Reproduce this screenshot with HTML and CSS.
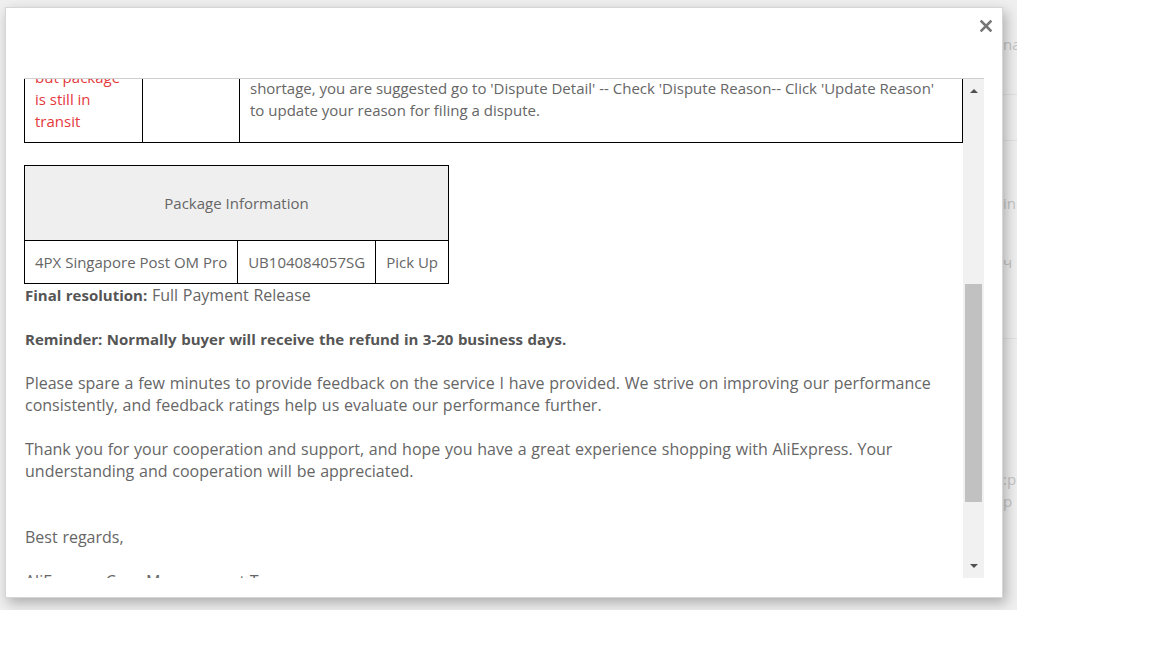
FILE: index.html
```html
<!DOCTYPE html>
<html>
<head>
<meta charset="utf-8">
<link rel="stylesheet" href="styles.css">
</head>
<body>
<div class="page">
  <div class="under">
    <div class="under-col">
      <div class="u-item u-t1">name</div>
      <div class="u-line u-l1"></div>
      <div class="u-line u-l2"></div>
      <div class="u-item u-t2">in</div>
      <div class="u-item u-t3">ч</div>
      <div class="u-line u-l3"></div>
      <div class="u-item u-t4">:р</div>
      <div class="u-item u-t5">р</div>
    </div>
  </div>

  <div class="modal">
    <div class="modal-header">
      <button class="close" aria-label="Close">
        <svg width="12" height="12" viewBox="0 0 12 12"><path d="M1.5 1.5 L10.5 10.5 M10.5 1.5 L1.5 10.5" stroke="#777" stroke-width="2.6" stroke-linecap="square"/></svg>
      </button>
    </div>
    <div class="modal-body">
      <div class="scroller">
        <div class="viewport">
          <div class="content" style="margin-top:-90px">
            <table class="reason-table">
              <tr>
                <td class="c1 red">Buyer did not<br>receive the<br>goods,<br>but package<br>is still in<br>transit</td>
                <td class="c2"></td>
                <td class="c3">If the tracking information shows that the goods are on the way,<br>please wait patiently for the package to arrive.<br>If your dispute is due to a wrong item or a quantity<br>shortage, you are suggested go to 'Dispute Detail' -- Check 'Dispute Reason-- Click 'Update Reason'<br>to update your reason for filing a dispute.</td>
              </tr>
            </table>

            <table class="pkg-table">
              <tr><th colspan="3">Package Information</th></tr>
              <tr>
                <td>4PX Singapore Post OM Pro</td>
                <td>UB104084057SG</td>
                <td>Pick Up</td>
              </tr>
            </table>

            <p><b>Final resolution:</b> Full Payment Release</p>
            <p><b>Reminder: Normally buyer will receive the refund in 3-20 business days.</b></p>
            <p>Please spare a few minutes to provide feedback on the service I have provided. We strive on improving our performance consistently, and feedback ratings help us evaluate our performance further.</p>
            <p class="gap2">Thank you for your cooperation and support, and hope you have a great experience shopping with AliExpress. Your understanding and cooperation will be appreciated.</p>
            <p>Best regards,</p>
            <p>AliExpress Case Management Team</p>
          </div>
        </div>
        <div class="scrollbar">
          <div class="arrow up"></div>
          <div class="thumb"></div>
          <div class="arrow down"></div>
        </div>
      </div>
    </div>
  </div>
</div>
</body>
</html>
```

FILE: styles.css
```css
* { box-sizing: border-box; }
html, body { margin: 0; padding: 0; background: #fff; }
body { font-family: "Open Sans", "Liberation Sans", sans-serif; }

.page {
  position: relative;
  width: 1017px;
  height: 610px;
  background: #efefef;
  overflow: hidden;
}

/* faint underlying page peeking out on the right */
.under { display: flex; justify-content: flex-end; height: 100%; }
.under-col {
  width: 14px;
  overflow: hidden;
  color: #c4c4c4;
  font-size: 15px;
  line-height: 20px;
  white-space: nowrap;
}
.u-item { height: 20px; }
.u-line { height: 1px; background: #e2e2e2; }
.u-t1 { margin-top: 34px; }
.u-l1 { margin-top: 40px; }
.u-l2 { margin-top: 45px; }
.u-t2 { margin-top: 52px; }
.u-t3 { margin-top: 39px; }
.u-l3 { margin-top: 66px; }
.u-t4 { margin-top: 130px; }
.u-t5 { margin-top: 2px; }

.modal {
  position: absolute;
  left: 5px;
  top: 7px;
  width: 998px;
  height: 591px;
  background: #fff;
  border: 1px solid #d6d6d6;
  box-shadow: 3px 5px 12px rgba(0,0,0,0.28);
  display: flex;
  flex-direction: column;
}

.modal-header {
  height: 71px;
  display: flex;
  justify-content: flex-end;
  align-items: flex-start;
  padding: 12px 10px 0 0;
}
.close {
  border: 0;
  background: transparent;
  padding: 0;
  width: 12px;
  height: 12px;
  display: flex;
  cursor: pointer;
}

.modal-body { padding: 0 18px 19px 18px; flex: 1; display: flex; }

.scroller {
  flex: 1;
  display: flex;
  border-top: 1px solid #cfcfcf;
  height: 500px;
}
.viewport {
  flex: 1;
  overflow: hidden;
  color: #666;
  font-size: 16px;
  line-height: 22px;
}
.content p { margin: 0 0 22px 0; padding-left: 1px; word-spacing: 0.6px; }
.content p.gap2 { margin-bottom: 44px; }
.content b { font-weight: 700; font-size: 15px; color: #555; }

.reason-table {
  width: 939px;
  border-collapse: collapse;
  margin-bottom: 22px;
  table-layout: fixed;
  font-size: 15px;
}
.reason-table td {
  border: 1px solid #000;
  padding: 10px;
  vertical-align: middle;
  white-space: nowrap;
  overflow: hidden;
}
.reason-table .c1 { width: 118px; }
.reason-table .c2 { width: 97px; }
.red { color: #e4393c; }

.pkg-table {
  border-collapse: collapse;
  font-size: 15px;
}
.pkg-table th {
  border: 1px solid #000;
  background: #efefef;
  font-weight: 400;
  height: 75px;
  padding: 0;
  text-align: center;
  vertical-align: middle;
}
.pkg-table td {
  border: 1px solid #000;
  padding: 10px;
  text-align: center;
  white-space: nowrap;
}

.scrollbar {
  width: 21px;
  background: #f1f1f1;
  display: flex;
  flex-direction: column;
  align-items: center;
}
.arrow { width: 0; height: 0; border-left: 4px solid transparent; border-right: 4px solid transparent; }
.arrow.up { border-bottom: 4px solid #505050; margin-top: 10px; }
.arrow.down { border-top: 4px solid #505050; margin-top: auto; margin-bottom: 10px; }
.thumb {
  width: 17px;
  height: 218px;
  background: #c1c1c1;
  margin-top: 191px;
}
```
